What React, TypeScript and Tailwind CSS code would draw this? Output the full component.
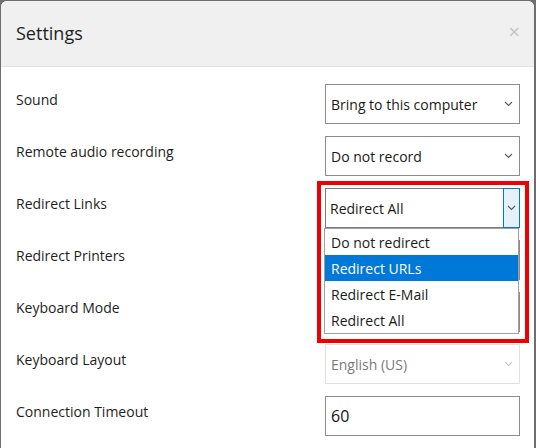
const font = { fontFamily: '"Open Sans", "Noto Sans", sans-serif' };

function Chevron({ light }: { light?: boolean }) {
  return (
    <svg width="9" height="6" viewBox="0 0 9 6" className="shrink-0">
      <polyline
        points="1,1 4.5,4.5 8,1"
        fill="none"
        stroke={light ? "#c8c8c8" : "#5a5a5a"}
        strokeWidth="1.1"
      />
    </svg>
  );
}

function Select({ value, disabled }: { value?: string; disabled?: boolean }) {
  return (
    <div
      className={
        "w-[195px] h-[40px] flex items-center justify-between pl-[5px] pr-[6px] border text-[14px] " +
        (disabled ? "border-[#e0e0e0] text-[#7a7a7a]" : "border-[#8c8c8c] text-[#1a1a1a]")
      }
    >
      <span>{value}</span>
      <Chevron light={disabled} />
    </div>
  );
}

function OpenSelect() {
  const items = ["Do not redirect", "Redirect URLs", "Redirect E-Mail", "Redirect All"];
  return (
    <div className="relative w-[195px] h-[40px]">
      {/* red highlight frame */}
      <div className="absolute left-[-8px] top-[-7px] w-[212px] h-[162px] border-[4px] border-[#ee0000] pointer-events-none z-20" />
      <div className="w-full h-full flex border border-[#7a7a7a] text-[14px] text-[#1a1a1a]">
        <div className="flex-1 flex items-center pl-[4px]">Redirect All</div>
        <div className="w-[17px] -my-[1px] -mr-[1px] border border-[#0078d7] bg-[#e5f1fb] flex items-center justify-center">
          <Chevron />
        </div>
      </div>
      <div className="absolute left-[-1px] top-[40px] w-[195px] bg-white border border-[#a0a0a0] z-10">
        {items.map((it, i) => (
          <div
            key={it}
            className={
              "h-[26px] flex items-center pl-[6px] text-[14px] " +
              (i === 1 ? "bg-[#0078d7] text-white" : "text-[#1a1a1a]")
            }
          >
            {it}
          </div>
        ))}
      </div>
    </div>
  );
}

const rows: { label: string; control: React.ReactNode }[] = [
  { label: "Sound", control: <Select value="Bring to this computer" /> },
  { label: "Remote audio recording", control: <Select value="Do not record" /> },
  { label: "Redirect Links", control: <OpenSelect /> },
  { label: "Redirect Printers", control: <Select /> },
  { label: "Keyboard Mode", control: <Select /> },
  { label: "Keyboard Layout", control: <Select value="English (US)" disabled /> },
  {
    label: "Connection Timeout",
    control: (
      <div className="w-[195px] h-[40px] flex items-center pl-[5px] border border-[#8c8c8c] text-[16px] text-[#111]">
        60
      </div>
    ),
  },
];

export default function App() {
  return (
    <div className="w-[536px] h-[448px] overflow-hidden bg-[#6e6e6e] pt-[1px] pl-[1px] pr-[2px]" style={font}>
      <div className="h-[460px] bg-white rounded-t-[6px] overflow-hidden flex flex-col">
        <div className="h-[66px] shrink-0 bg-[#f0f0f0] border-b border-[#e3e3e3] flex items-center justify-between pl-[15px] pr-[14px]">
          <h1 className="text-[18px] text-[#1e1e1e] -mt-[1px]">Settings</h1>
          <span className="text-[20px] leading-none text-[#c4c4c4] -mt-[4px]">×</span>
        </div>
        <div className="flex flex-col gap-[12px] pt-[17px] pl-[15px] pr-[14px]">
          {rows.map((r) => (
            <div key={r.label} className="flex items-start justify-between h-[40px]">
              <div className="pt-[6px] text-[14px] leading-[20px] text-[#1e1e1e]">{r.label}</div>
              {r.control}
            </div>
          ))}
        </div>
      </div>
    </div>
  );
}
